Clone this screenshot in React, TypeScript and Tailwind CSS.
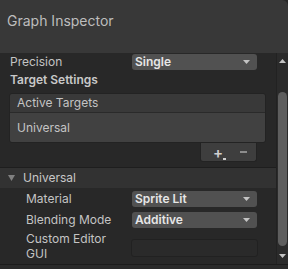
const font = { fontFamily: "Inter, 'Liberation Sans', sans-serif" };

function Arrow({ up = false, color = "#c4c4c4" }: { up?: boolean; color?: string }) {
  return (
    <svg width="7" height="4" viewBox="0 0 7 4" className="block">
      <path d={up ? "M0 4 L3.5 0 L7 4 Z" : "M0 0 L7 0 L3.5 4 Z"} fill={color} />
    </svg>
  );
}

function Dropdown({ value }: { value: string }) {
  return (
    <div className="flex h-[16px] w-[125px] items-center justify-between rounded-[3px] bg-[#515151] pl-[3px] pr-[7px]">
      <span className="text-[12px] font-semibold leading-none text-[#e6e6e6]">{value}</span>
      <Arrow />
    </div>
  );
}

function Field({ label, value, indent }: { label: string; value: string; indent?: boolean }) {
  return (
    <div className={`flex h-[16px] items-center ${indent ? "pl-[26px]" : "pl-[10px]"}`}>
      <span className={`${indent ? "w-[106px]" : "w-[122px]"} text-[12px] text-[#c4c4c4]`}>{label}</span>
      <Dropdown value={value} />
    </div>
  );
}

export default function App() {
  return (
    <div className="flex h-[269px] w-[288px] flex-col overflow-hidden bg-[#282828]" style={font}>
      <div className="h-[53px] shrink-0 rounded-tr-[6px] bg-[#383838] pl-[7px] pt-[10px] text-[14px] text-[#bdbdbd]">
        Graph Inspector
      </div>

      <div className="flex h-[211px] shrink-0">
        <div className="flex flex-1 flex-col">
          <div className="mt-[1px] h-[17px]">
            <Field label="Precision" value="Single" />
          </div>
          <div className="flex h-[17px] items-center pl-[10px] text-[12px] font-semibold text-[#c8c8c8]">
            Target Settings
          </div>

          <div className="ml-[9px] mt-[5px] w-[257px] overflow-hidden rounded-[3px] border border-[#232323]">
            <div className="flex h-[19px] items-center border-b border-[#2a2a2a] bg-[#393939] pl-[7px] text-[12px] text-[#c4c4c4]">
              Active Targets
            </div>
            <div className="flex h-[29px] items-center bg-[#414141] pl-[7px] text-[12px] text-[#c4c4c4]">
              Universal
            </div>
          </div>
          <div className="mr-[19px] flex h-[19px] w-[57px] items-center self-end rounded-b-[3px] border border-t-0 border-[#232323] bg-[#3e3e3e] pl-[12px]">
            <span className="relative text-[15px] font-semibold leading-none text-[#cfcfcf]">
              +
              <span className="absolute -right-[3px] bottom-[0px] block h-[2px] w-[3px] bg-[#cfcfcf]" />
            </span>
            <span className="ml-[17px] block h-[1.5px] w-[7px] bg-[#8c8c8c]" />
          </div>

          <div className="mt-[5px] border-t border-[#1e1e1e]" />
          <div className="flex h-[20px] items-center bg-[#323232] pl-[8px]">
            <svg width="7" height="6" viewBox="0 0 7 6" className="block">
              <path d="M0 0 L7 0 L3.5 6 Z" fill="#808080" />
            </svg>
            <span className="ml-[8px] text-[12px] text-[#c8c8c8]">Universal</span>
          </div>

          <div className="mt-[3px]">
            <Field label="Material" value="Sprite Lit" indent />
          </div>
          <div className="mt-[5px]">
            <Field label="Blending Mode" value="Additive" indent />
          </div>
          <div className="mt-[3px] flex items-start pl-[26px]">
            <span className="w-[105px] text-[12px] leading-[15px] text-[#c4c4c4]">
              Custom Editor
              <br />
              GUI
            </span>
            <div className="mt-[8px] h-[18px] w-[127px] rounded-[3px] border border-[#212121] bg-[#2a2a2a]" />
          </div>
        </div>

        <div className="flex w-[12px] flex-col items-center border-l border-[#222222] bg-[#2b2b2b]">
          <div className="mt-[6px]">
            <Arrow up />
          </div>
          <div className="mt-[29px] h-[154px] w-[9px] rounded-full bg-[#5e5e5e]" />
          <div className="mt-[8px]">
            <Arrow />
          </div>
        </div>
      </div>

      <div className="flex-1 border-t border-[#1c1c1c] bg-[#2a2a2a]" />
    </div>
  );
}
